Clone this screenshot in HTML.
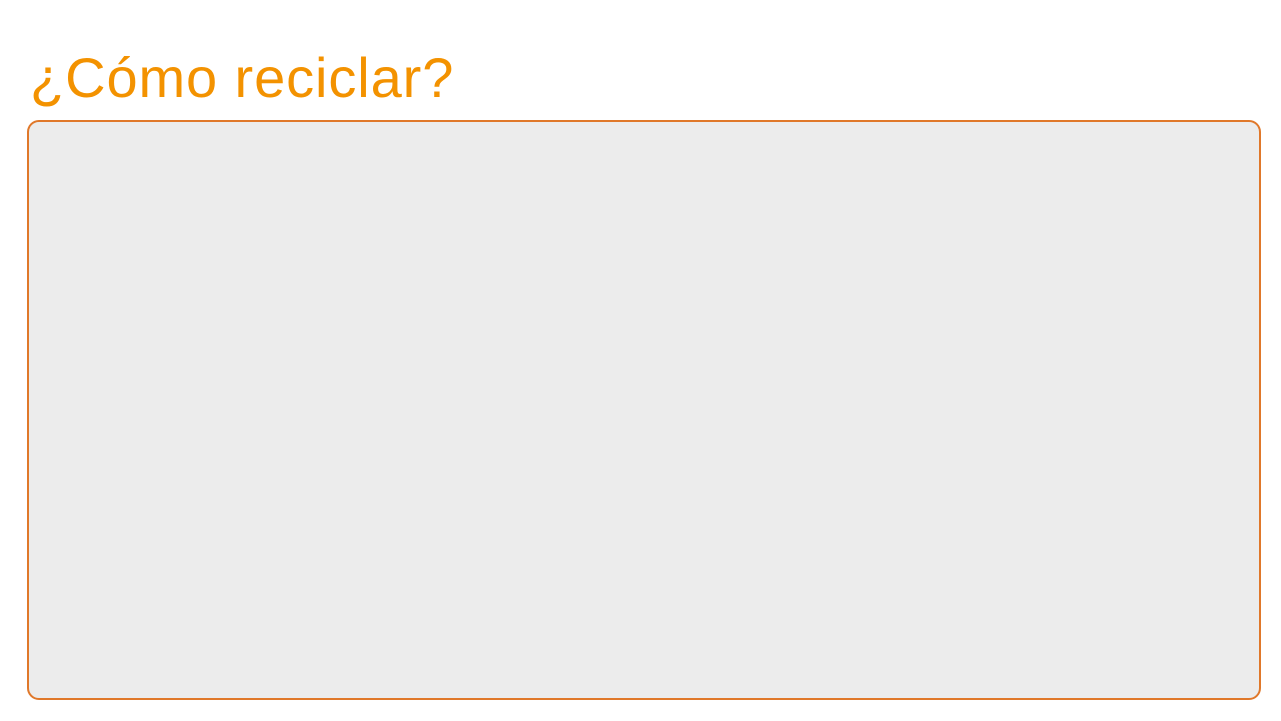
<!DOCTYPE html>
<html><head><meta charset="utf-8"><style>
html,body{margin:0;padding:0;background:#fff;width:1281px;height:721px;overflow:hidden}
h1{position:absolute;left:30px;top:42px;margin:0;font:56px/72px "Liberation Sans",sans-serif;letter-spacing:0.9px;color:#F39200;font-weight:normal;white-space:nowrap}
.box{position:absolute;left:27px;top:120px;width:1230px;height:576px;border:2px solid #E0782A;border-radius:12px;background:#ECECEC}
</style></head><body>
<h1>¿Cómo reciclar?</h1>
<div class="box"></div>
</body></html>
